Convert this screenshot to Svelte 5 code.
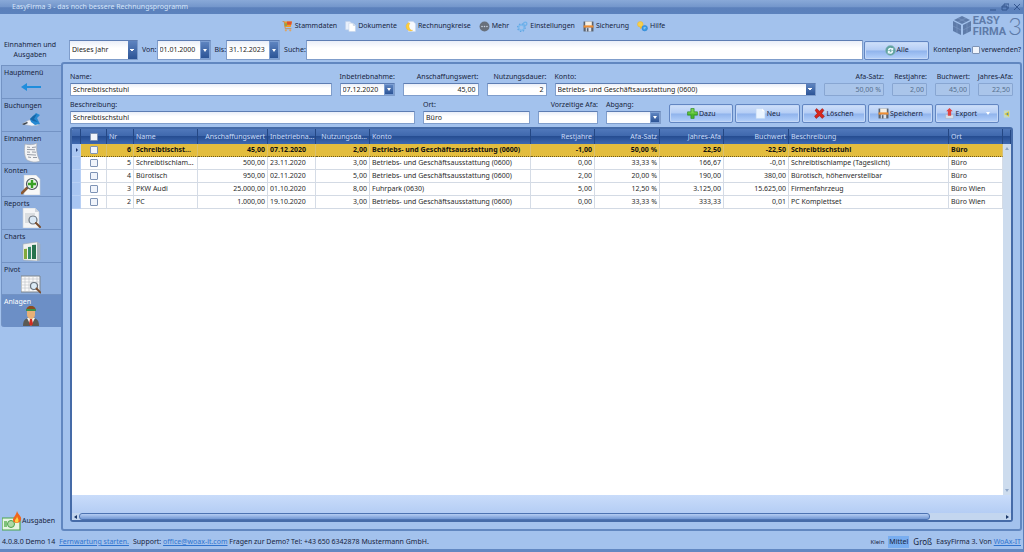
<script>
  let period = $state('Dieses Jahr');
  let accountPlan = $state(false);
  let current = $state(0);

  const menu = [
    ['cart', 'Stammdaten'],
    ['docs', 'Dokumente'],
    ['moon', 'Rechnungkreise'],
    ['more', 'Mehr'],
    ['gears', 'Einstellungen'],
    ['disk', 'Sicherung'],
    ['help', 'Hilfe']
  ];
  const tabs = [
    ['arrow', 'Hauptmenü'],
    ['booking', 'Buchungen'],
    ['receipt', 'Einnahmen'],
    ['account', 'Konten'],
    ['report', 'Reports'],
    ['chart', 'Charts'],
    ['pivot', 'Pivot'],
    ['person', 'Anlagen']
  ];
  const actions = [
    ['plus', 'Dazu'],
    ['page', 'Neu'],
    ['cross', 'Löschen'],
    ['disk', 'Speichern'],
    ['upload', 'Export']
  ];
  const columns = [
    { title: 'Nr', cls: 'c-nr', num: true },
    { title: 'Name', cls: 'c-name' },
    { title: 'Anschaffungswert', cls: 'c-value', num: true },
    { title: 'Inbetriebna...', cls: 'c-date' },
    { title: 'Nutzungsda...', cls: 'c-use', num: true },
    { title: 'Konto', cls: 'c-account' },
    { title: 'Restjahre', cls: 'c-mid', num: true },
    { title: 'Afa-Satz', cls: 'c-broad', num: true },
    { title: 'Jahres-Afa', cls: 'c-mid', num: true },
    { title: 'Buchwert', cls: 'c-broad', num: true },
    { title: 'Beschreibung', cls: 'c-text' },
    { title: 'Ort', cls: 'c-place' }
  ];
  const office = 'Betriebs- und Geschäftsausstattung (0600)';
  const rows = [
    ['6', 'Schreibtischst...', '45,00', '07.12.2020', '2,00', office, '-1,00', '50,00 %', '22,50', '-22,50', 'Schreibtischstuhl', 'Büro'],
    ['5', 'Schreibtischlam...', '500,00', '23.11.2020', '3,00', office, '0,00', '33,33 %', '166,67', '-0,01', 'Schreibtischlampe (Tageslicht)', 'Büro'],
    ['4', 'Bürotisch', '950,00', '02.11.2020', '5,00', office, '2,00', '20,00 %', '190,00', '380,00', 'Bürotisch, höhenverstellbar', 'Büro'],
    ['3', 'PKW Audi', '25.000,00', '01.10.2020', '8,00', 'Fuhrpark (0630)', '5,00', '12,50 %', '3.125,00', '15.625,00', 'Firmenfahrzeug', 'Büro Wien'],
    ['2', 'PC', '1.000,00', '19.10.2020', '3,00', office, '0,00', '33,33 %', '333,33', '0,01', 'PC Komplettset', 'Büro Wien']
  ];
</script>

{#snippet icon(name)}
  <svg class="icon" viewBox="0 0 20 20" aria-hidden="true">
    {#if name === 'cart'}
      <path d="M4 1h14l-2 10H5z" fill="#f39a25" />
      <path d="M9 1h9l-1 6H9z" fill="#dd5230" />
      <path d="M4 4h5v5H5z" fill="#8aa84a" />
      <path d="M1 1h3l2 13h11" fill="none" stroke="#cc8a48" stroke-width="1.6" />
      <circle cx="7" cy="17" r="2" fill="#dba468" /><circle cx="15" cy="17" r="2" fill="#dba468" />
    {:else if name === 'docs'}
      <path d="M1 1h8l4 4v11H1z" fill="#e9f1fc" stroke="#c3d2e8" />
      <path d="M7 4h8l4 4v11H7z" fill="#fff" stroke="#c3d2e8" />
      <path d="M15 4v4h4" fill="#d5e1f1" stroke="#b4c6e0" />
    {:else if name === 'moon'}
      <path d="M6 1h9l4 4v14H6z" fill="#f6f9fe" stroke="#ccd9ec" />
      <path d="M6 3a8 8 0 1 0 8 14C8 17 5 9 9 4z" fill="#ffcf3d" stroke="#e8ac20" stroke-width=".6" />
    {:else if name === 'more'}
      <circle cx="10" cy="10" r="9" fill="#68707c" />
      <circle cx="5.5" cy="10" r="1.5" fill="#c9d3e2" /><circle cx="10" cy="10" r="1.5" fill="#c9d3e2" /><circle cx="14.5" cy="10" r="1.5" fill="#c9d3e2" />
    {:else if name === 'gears'}
      <circle cx="8" cy="12" r="5" fill="none" stroke="#7db9ee" stroke-width="3" />
      <circle cx="8" cy="12" r="7" fill="none" stroke="#5ba2e2" stroke-width="2" stroke-dasharray="2.5 3" />
      <circle cx="15" cy="5" r="3" fill="none" stroke="#6fb1ea" stroke-width="2.4" />
    {:else if name === 'disk'}
      <path d="M1 1h18v18H1z" fill="#5b626d" />
      <path d="M4 1h12v8H4z" fill="#f6f0e4" />
      <path d="M1 8h18v4H1z" fill="#ee8d32" />
      <path d="M5 12h10v7H5z" fill="#dbe3ef" />
      <path d="M7 13h3v6H7z" fill="#56606e" />
    {:else if name === 'help'}
      <circle cx="6" cy="6" r="5" fill="#f5cf50" stroke="#eeb62a" />
      <path d="M5 10l1 5 4-4z" fill="#f0bb2e" />
      <circle cx="14" cy="13" r="5" fill="#389be8" stroke="#2c82cc" />
      <path d="M12 12h4M12 14h3" stroke="#cde8ff" />
    {:else if name === 'arrow'}
      <path d="M0 10l6-4v3h14v2H6v3z" fill="#1f8ddc" />
    {:else if name === 'booking'}
      <path d="M1 14l7-4 6 1 4 4-7 1z" fill="#f4f6fa" stroke="#aab6c8" stroke-width=".6" />
      <path d="M9 9l6-6 4 2-3 3 3 6-5 1-4-3z" fill="#2689d2" />
      <path d="M12 6l4-2-3 5 4 3-5-1-3-2z" fill="#1766a8" />
      <path d="M1 14l5-2 1 1-4 2z" fill="#39424d" />
    {:else if name === 'receipt'}
      <path d="M4 1c4 1 9 1 12-1-1 6 0 13 3 18-4 2-9 1-13-1C3 13 3 7 4 1z" fill="#f3f4f5" stroke="#a2a9b3" stroke-width=".7" />
      <path d="M6 4l3 .4M11 4.5l4-.5M6 6.5l8 .3M6 9l3 .2M11 9l4 .2M6 11.5l9 .6M7 14l3 .5M12 14.5h4" stroke="#8b929d" stroke-width=".9" />
    {:else if name === 'account'}
      <path d="M3 0h12l4 4v16H3z" fill="#f7f8f8" stroke="#c8ced6" stroke-width=".6" />
      <path d="M6 13L1 18" stroke="#8a5a34" stroke-width="2.6" stroke-linecap="round" />
      <circle cx="11" cy="9" r="5.5" fill="#e9f4e6" stroke="#4d5560" stroke-width="1.2" />
      <path d="M11 5v8M7 9h8" stroke="#38a125" stroke-width="2.4" />
    {:else if name === 'report'}
      <path d="M2 0h12l4 4v16H2z" fill="#f4f5f6" stroke="#c8ced6" stroke-width=".6" />
      <path d="M14 0v4h4" fill="#cfd5dc" />
      <path d="M4 6h10M4 8h6M4 10h5M4 12h5M4 14h6" stroke="#b4bac2" stroke-width=".8" />
      <circle cx="12" cy="12" r="4" fill="#d9e8f5" stroke="#6d7680" stroke-width="1.2" />
      <path d="M15 15l4 4" stroke="#7a4d2d" stroke-width="2" stroke-linecap="round" />
    {:else if name === 'chart'}
      <path d="M2 3l14-2 3 2v16l-3 1-14-1z" fill="#f0f1ef" stroke="#9fa8b0" stroke-width=".6" />
      <path d="M16 1l3 2v16l-3 1z" fill="#a7b2bb" />
      <path d="M3 8l3-.3V18H3z" fill="#82a93c" /><path d="M7 6l3-.3V18H7z" fill="#348b68" /><path d="M11 4l4-.3V18h-4z" fill="#27724d" />
    {:else if name === 'pivot'}
      <path d="M0 2h19v16H0z" fill="#fafafa" stroke="#7d858e" />
      <path d="M0 5h19M0 8h19M0 11h19M0 14h19M4 2v16M8 2v16M12 2v16M16 2v16" stroke="#bcc1c7" stroke-width=".6" />
      <circle cx="13" cy="12" r="3.5" fill="#dcebf6" stroke="#69727c" stroke-width="1.2" />
      <path d="M15.5 14.5l4 4" stroke="#7a4d2d" stroke-width="1.8" stroke-linecap="round" />
    {:else if name === 'person'}
      <path d="M2 20c0-7 3-8 8-8s8 1 8 8z" fill="#5b5a54" />
      <path d="M6 12h8l-4 8z" fill="#f4f4ef" /><path d="M9 13h2l1 5-2 2-2-2z" fill="#d22d21" />
      <path d="M6 4h8v5c0 2-2 4-4 4s-4-2-4-4z" fill="#e8b077" />
      <path d="M5 5c0-7 10-7 10 0z" fill="#8a4b22" /><path d="M5 3h10v2H5z" fill="#3d8f4e" />
    {:else if name === 'plus'}
      <path d="M7 1h6v6h6v6h-6v6H7v-6H1V7h6z" fill="#49b629" stroke="#247f1a" stroke-linejoin="round" />
      <path d="M8 2h4v6h6v2H2V8h6z" fill="#8edc62" opacity=".7" />
    {:else if name === 'page'}
      <path d="M2 1h11l5 5v13H2z" fill="#eaf4ff" stroke="#bed7f2" /><path d="M13 1v5h5z" fill="#fff" />
    {:else if name === 'cross'}
      <path d="M2 4l3-3 5 5 5-5 3 3-4 6 5 5-4 4-5-5-6 5-3-4 5-5z" fill="#d8261d" stroke="#8f1713" stroke-linejoin="round" />
    {:else if name === 'upload'}
      <path d="M3 12h14v7H3z" fill="#d9e0ea" stroke="#a6b4c8" />
      <path d="M10 0l6 6h-3v8H7V6H4z" fill="#e04343" />
    {:else if name === 'refresh'}
      <circle cx="10" cy="10" r="9" fill="#5fa39f" stroke="#8fb6c4" />
      <path d="M5 10a5 5 0 0 1 8-4l2-1v5h-5l2-2a3 3 0 0 0-4 2zM15 11a5 5 0 0 1-8 4l-2 1v-5h5l-2 2a3 3 0 0 0 4-2z" fill="#eef9ff" />
    {:else if name === 'back'}
      <path d="M2 1h15v18H2z" fill="#c3d8c4" /><path d="M15 3v14L3 10z" fill="#dccb3c" /><path d="M13 7v6l-5-3z" fill="#3f7fbf" />
    {:else if name === 'money'}
      <path d="M0 7h18v12H0z" fill="#e7f5e3" stroke="#4ba34c" stroke-width="1.2" />
      <circle cx="9" cy="13" r="3.5" fill="#aed9a6" stroke="#4ba34c" /><path d="M2 10h3v6H2z" fill="#7fc27a" />
      <path d="M15 0c1 4 5 5 4 9-1 4-8 4-8 0 0-3 3-4 4-9z" fill="#f0651c" /><path d="M15 5c0 2 2 3 1.5 5s-3.5 2-3.5 0 2-2 2-5z" fill="#ffd244" />
    {/if}
  </svg>
{/snippet}

<div class="app">
  <header class="titlebar">
    <span>EasyFirma 3 - das noch bessere Rechnungsprogramm</span>
    <div class="window-buttons">
      <button aria-label="Minimieren"><svg viewBox="0 0 8 8"><path d="M1 7h6" /></svg></button>
      <button aria-label="Wiederherstellen"><svg viewBox="0 0 8 8"><path d="M3 3V1h5v4H6M1 3h5v4H1zM1 4h5" /></svg></button>
      <button aria-label="Schließen"><svg viewBox="0 0 8 8"><path d="M1 1l6 6M7 1L1 7" /></svg></button>
    </div>
  </header>

  <div class="menubar">
    <nav>
      {#each menu as [glyph, label]}
        <button>{@render icon(glyph)}{label}</button>
      {/each}
    </nav>
    <div class="logo">
      <svg class="cube" viewBox="0 0 18 20" aria-hidden="true">
        <path d="M9 0l8 4-8 4-8-4zM0 5l8 4v10l-8-4zM18 5l-8 4v10l8-4z" />
        <path class="cut" d="M5 2l8 4M13 2L5 6M4 7v10M0 10l8 4M14 7v10M18 10l-8 4" />
      </svg>
      <span class="brand">EASY<br />FIRMA</span>
      <span class="version">3</span>
    </div>
  </div>

  <div class="filters">
    <div class="section-title">Einnahmen und<br />Ausgaben</div>
    <select class="field period" aria-label="Zeitraum" bind:value={period}>
      <option>Dieses Jahr</option>
      <option>Letztes Jahr</option>
    </select>
    <label for="from">Von:</label>
    <div class="combo big"><input id="from" value="01.01.2000" /><button aria-label="Kalender Von"></button></div>
    <label for="to">Bis:</label>
    <div class="combo big"><input id="to" value="31.12.2023" /><button aria-label="Kalender Bis"></button></div>
    <label for="search">Suche:</label>
    <input class="field search" id="search" />
    <button class="action all">{@render icon('refresh')}Alle</button>
    <label class="plan">Kontenplan<input type="checkbox" bind:checked={accountPlan} /><span>verwenden?</span></label>
  </div>

  <div class="body">
    <aside>
      <nav class="tabs">
        {#each tabs as [glyph, label], i}
          <button class:active={i === 7}><span>{label}</span>{@render icon(glyph)}</button>
        {/each}
      </nav>
      <button class="expenses">{@render icon('money')}Ausgaben</button>
    </aside>

    <main>
      <div class="form">
        <div class="cell grow"><label for="name">Name:</label><input class="field" id="name" value="Schreibtischstuhl" /></div>
        <div class="cell w-date"><label for="start">Inbetriebnahme:</label><div class="combo"><input id="start" value="07.12.2020" /><button aria-label="Kalender Inbetriebnahme"></button></div></div>
        <div class="cell w-value num"><label for="value">Anschaffungswert:</label><input class="field" id="value" value="45,00" /></div>
        <div class="cell w-use num"><label for="use">Nutzungsdauer:</label><input class="field" id="use" value="2" /></div>
        <div class="cell grow"><label for="account">Konto:</label><select class="field" id="account"><option>{office}</option><option>Fuhrpark (0630)</option></select></div>
        <div class="cell w-use num"><label for="rate">Afa-Satz:</label><input class="field" id="rate" value="50,00 %" disabled /></div>
        <div class="cell w-small num"><label for="rest">Restjahre:</label><input class="field" id="rest" value="2,00" disabled /></div>
        <div class="cell w-small num"><label for="book">Buchwert:</label><input class="field" id="book" value="45,00" disabled /></div>
        <div class="cell w-small num"><label for="yearly">Jahres-Afa:</label><input class="field" id="yearly" value="22,50" disabled /></div>
      </div>
      <div class="form second">
        <div class="cell grow"><label for="desc">Beschreibung:</label><input class="field" id="desc" value="Schreibtischstuhl" /></div>
        <div class="cell w-place"><label for="place">Ort:</label><input class="field" id="place" value="Büro" /></div>
        <div class="cell w-use num"><label for="early">Vorzeitige Afa:</label><input class="field" id="early" /></div>
        <div class="cell w-date"><label for="exit">Abgang:</label><div class="combo"><input id="exit" /><button aria-label="Kalender Abgang"></button></div></div>
        <div class="actions">
          {#each actions as [glyph, label]}
            <button class="action">{@render icon(glyph)}{label}{#if glyph === 'upload'}<i class="caret"></i>{/if}</button>
          {/each}
          <button class="back" aria-label="Zurück">{@render icon('back')}</button>
        </div>
      </div>

      <div class="grid">
        <div class="rows">
          <table>
            <thead>
              <tr>
                <th class="c-mark"></th>
                <th class="c-check"><input type="checkbox" aria-label="Alle auswählen" /></th>
                {#each columns as c}<th class={c.cls} class:num={c.num && c.title !== 'Nr'}>{c.title}</th>{/each}
                <th class="c-end"></th>
              </tr>
            </thead>
            <tbody>
              {#each rows as row, r}
                <tr class:current={r === current} onclick={() => (current = r)}>
                  <td class="mark">{#if r === current}<i></i>{/if}</td>
                  <td class="check"><input type="checkbox" aria-label={'Nr ' + row[0]} /></td>
                  {#each row as value, c}<td class:num={columns[c].num}>{value}</td>{/each}
                  <td class="end"></td>
                </tr>
              {/each}
            </tbody>
          </table>
          <div class="vscroll"><i class="up"></i><i class="down"></i></div>
        </div>
        <div class="summary"></div>
        <div class="hscroll"><i class="left"></i><div class="track"><div class="thumb"></div></div><i class="right"></i></div>
      </div>
    </main>
  </div>

  <footer>
    <span>4.0.8.0 Demo 14</span>
    <a href="#remote">Fernwartung starten.</a>
    <span>Support: <a href="#mail">office@woax-it.com</a> Fragen zur Demo? Tel: +43 650 6342878 Mustermann GmbH.</span>
    <div class="sizes">
      <button class="small">Klein</button>
      <button class="medium">Mittel</button>
      <button class="large">Groß</button>
      <span>EasyFirma 3. Von <a href="#woax">WoAx-IT</a></span>
    </div>
  </footer>
</div>

<style>
  :global(body) {
    margin: 0;
  }
  .app {
    box-sizing: border-box;
    min-height: 100vh;
    display: flex;
    flex-direction: column;
    background: #a3c2ed;
    border-right: 1px solid #5a7fb8;
    border-bottom: 3px solid #6288c2;
    font: 7px/12px 'Noto Sans', sans-serif;
    color: #17243d;
  }
  .app :global(*) {
    box-sizing: border-box;
  }
  button,
  input,
  select {
    font: inherit;
    color: inherit;
    margin: 0;
    padding: 0;
    border: 0;
    background: none;
    border-radius: 0;
  }
  button {
    white-space: nowrap;
  }
  .icon {
    width: 11px;
    height: 11px;
    flex: none;
  }
  .titlebar {
    height: 14px;
    padding: 0 2px 0 12px;
    display: flex;
    align-items: center;
    justify-content: space-between;
    background: linear-gradient(#89a9d8, #7396cb 50%, #5b80bb 55%, #5c82bd);
    color: #d5e4fa;
  }
  .window-buttons {
    display: flex;
    gap: 4px;
  }
  .window-buttons button {
    height: 8px;
    width: 8px;
    display: flex;
  }
  .window-buttons svg {
    width: 8px;
    height: 8px;
    fill: none;
    stroke: #34568f;
  }
  .menubar {
    height: 24px;
    display: grid;
    grid-template-columns: 1fr auto 1fr;
    align-items: center;
  }
  .menubar nav {
    grid-column: 2;
    display: flex;
    gap: 8px;
    padding-right: 76px;
  }
  .menubar nav button {
    display: flex;
    align-items: center;
    gap: 2px;
  }
  .menubar nav,
  .menubar nav + .logo {
    min-width: 0;
  }
  .logo {
    display: flex;
    justify-content: flex-end;
    align-items: center;
    gap: 2px;
    padding-right: 1px;
    color: #5e7ba9;
  }
  .cube {
    width: 18px;
    height: 20px;
    fill: #5e7ba9;
  }
  .cube .cut {
    fill: none;
    stroke: #7d9ac8;
    stroke-width: 0.6;
  }
  .brand {
    font: bold 11px/11px Roboto, sans-serif;
  }
  .version {
    font: 300 24px/20px Lato, sans-serif;
  }
  .filters {
    height: 24px;
    padding-right: 2px;
    display: flex;
    align-items: center;
  }
  .filters label {
    margin-left: 4px;
  }
  .section-title {
    width: 60px;
    line-height: 10px;
    text-align: center;
    margin-right: 9px;
  }
  .field,
  .combo {
    height: 13px;
    width: 100%;
    padding: 0 2px;
    border: 1px solid #7f9dcb;
    border-top-color: #5d7db3;
    border-radius: 1px;
    background: linear-gradient(#e9eef8, #fff 40%);
    color: #1d1d1d;
  }
  .field:disabled {
    background: #aac5ea;
    border-color: #88a6d2;
    color: #56708f;
    opacity: 1;
  }
  select.field {
    appearance: none;
    background:
      linear-gradient(45deg, transparent 50%, #fff 50%) right 5px center / 2px 3px no-repeat,
      linear-gradient(-45deg, transparent 50%, #fff 50%) right 3px center / 2px 3px no-repeat,
      linear-gradient(#5e84c0, #2c5496) right / 9px 100% no-repeat,
      linear-gradient(#e9eef8, #fff 40%);
  }
  .combo {
    display: flex;
    padding: 0 0 0 2px;
  }
  .combo input {
    flex: 1;
    width: 0;
    min-width: 0;
  }
  .combo button {
    width: 10px;
    display: grid;
    place-items: center;
    background: linear-gradient(#5e84c0, #2c5496);
    border: 1px solid #7d9fd3;
  }
  .combo button::after {
    content: '';
    border: 2px solid transparent;
    border-top: 3px solid #fff;
    border-bottom: 0;
  }
  .filters .field,
  .filters .combo {
    height: 20px;
  }
  .filters .period {
    width: 69px;
    flex: none;
  }
  .combo.big {
    width: 54px;
    flex: none;
  }
  .search.field {
    flex: 1;
    width: 0;
  }
  .action {
    height: 19px;
    flex: 1;
    display: flex;
    align-items: center;
    justify-content: center;
    gap: 1px;
    border: 1px solid #6286c2;
    border-radius: 2px;
    background: linear-gradient(#cfe0fa, #b4cdf5 48%, #8fb3ec 52%, #b6d2fb);
    box-shadow: inset 0 0 0 1px #c4d8f6;
  }
  .all {
    flex: none;
    width: 65px;
    margin-left: 1px;
  }
  .plan {
    display: flex;
    align-items: center;
    gap: 1px;
  }
  input[type='checkbox'] {
    appearance: none;
    width: 8px;
    height: 8px;
    border: 1px solid #7e93b5;
    border-radius: 1px;
    background: #f0f4fb;
    display: block;
  }
  input[type='checkbox']:checked {
    background: #2c5496;
  }
  .body {
    flex: 1;
    display: flex;
  }
  aside {
    width: 61px;
    flex: none;
    display: flex;
    flex-direction: column;
    justify-content: space-between;
    padding-top: 3px;
  }
  .tabs {
    height: 262px;
    display: grid;
    grid-template-rows: repeat(8, 1fr);
  }
  .tabs button {
    margin-left: 1px;
    padding: 0 4px 0 2px;
    display: flex;
    flex-direction: column;
    align-items: flex-start;
    background: #8fafde;
    border-top: 1px solid #7393c4;
    border-left: 1px solid #7393c4;
    min-height: 0;
  }
  .tabs span {
    line-height: 13px;
  }
  .tabs .icon {
    width: 20px;
    height: 20px;
    align-self: center;
    margin-top: -2px;
  }
  .tabs .active {
    background: #6c8fc6;
    color: #fff;
    border-radius: 0 0 0 3px;
  }
  .expenses {
    display: flex;
    align-items: center;
    padding-left: 2px;
  }
  .expenses .icon {
    width: 20px;
    height: 20px;
  }
  main {
    flex: 1;
    min-width: 0;
    margin-right: 1px;
    padding: 6px 7px 7px;
    border: 2px solid #6187c0;
    border-radius: 3px;
    display: flex;
    flex-direction: column;
  }
  .form {
    display: flex;
    align-items: flex-end;
    gap: 8px;
    height: 26px;
  }
  .second {
    height: 28px;
  }
  .cell {
    flex: none;
    display: flex;
    flex-direction: column;
  }
  .cell label {
    line-height: 13px;
    white-space: nowrap;
  }
  .grow {
    flex: 1;
    min-width: 0;
  }
  .num {
    text-align: right;
  }
  .cell.num label {
    display: flex;
    justify-content: flex-end;
  }
  .cell.num input {
    text-align: right;
  }
  .w-date {
    width: 55px;
  }
  .w-value {
    width: 76px;
  }
  .w-use {
    width: 60px;
  }
  .w-small {
    width: 35px;
  }
  .w-place {
    width: 107px;
  }
  .actions {
    width: 344px;
    display: flex;
    align-items: center;
    gap: 2px;
    margin-bottom: 1px;
  }
  .back {
    width: 12px;
    height: 10px;
    display: flex;
    justify-content: center;
    align-items: center;
  }
  .back .icon {
    width: 8px;
    height: 8px;
  }
  .caret {
    border: 2px solid transparent;
    border-top: 3px solid #fff;
    border-bottom: 0;
    margin-left: 8px;
  }
  .grid {
    flex: 1;
    margin-top: 3px;
    display: flex;
    flex-direction: column;
    border: 2px solid #456ba8;
    border-radius: 3px;
    background: #fff;
    overflow: hidden;
  }
  .rows {
    flex: 1;
    position: relative;
  }
  table {
    width: 100%;
    table-layout: fixed;
    border-collapse: separate;
    border-spacing: 0;
  }
  th {
    height: 15px;
    padding: 0 2px;
    font-weight: normal;
    text-align: left;
    color: #c9dbf8;
    background: linear-gradient(#5078bb, #3f68ad 45%, #264d92 50%, #3e69b0);
    border-right: 1px solid #244784;
    white-space: nowrap;
  }
  th.num {
    text-align: right;
  }
  td {
    height: 13px;
    padding: 0 2px;
    line-height: 12px;
    white-space: nowrap;
    color: #2b2b2b;
    border-right: 1px solid #d5dce6;
    border-bottom: 1px solid #d3dae4;
  }
  .current td {
    background: #e3bd3e;
    font-weight: bold;
    color: #111;
    border-bottom: 1px dotted #6e5c1e;
    border-right-color: #d9c070;
  }
  td.mark,
  .current td.mark {
    background: #a9c6f2;
    border-color: #b8d0f5;
    border-bottom-style: solid;
  }
  .mark i {
    display: block;
    width: 0;
    border: 2px solid transparent;
    border-left: 2px solid #16306b;
    border-right: 0;
    margin-left: 2px;
  }
  .check input,
  .c-check input {
    margin: 0 auto;
  }
  .end,
  .current .end {
    background: none;
    border: 0;
  }
  .c-mark { width: 9px; }
  .c-check { width: 26px; }
  .c-nr { width: 27px; }
  .c-name { width: 64px; }
  .c-value { width: 70px; }
  .c-date { width: 48px; }
  .c-use { width: 54px; }
  .c-account { width: 161px; }
  .c-mid { width: 64px; }
  .c-broad { width: 65px; }
  .c-place { width: 54px; }
  .c-end { width: 8px; }
  .vscroll {
    position: absolute;
    top: 15px;
    right: 0;
    bottom: 0;
    width: 8px;
    display: flex;
    flex-direction: column;
    justify-content: space-between;
    align-items: center;
    padding: 3px 0;
    background: #cddcee;
  }
  .up,
  .down {
    border: 2px solid transparent;
  }
  .up {
    border-top: 0;
    border-bottom: 3px solid #8ea6c8;
  }
  .down {
    border-bottom: 0;
    border-top: 3px solid #8ea6c8;
  }
  .summary {
    height: 18px;
    background: linear-gradient(#c9dcfa, #b4cdf4);
  }
  .hscroll {
    height: 7px;
    display: flex;
    align-items: center;
    gap: 2px;
    padding: 0 2px;
    background: #c3d6ef;
  }
  .left,
  .right {
    border: 2px solid transparent;
  }
  .left {
    border-left: 0;
    border-right: 3px solid #1c3768;
  }
  .right {
    border-right: 0;
    border-left: 3px solid #1c3768;
  }
  .track {
    flex: 1;
  }
  .thumb {
    width: 92%;
    height: 7px;
    border: 1px solid #4d73b2;
    border-radius: 3px;
    background: linear-gradient(#b5cdf3, #7398d4);
  }
  footer {
    height: 18px;
    padding: 4px 2px 0;
    display: flex;
    align-items: center;
    gap: 4px;
    white-space: nowrap;
  }
  a {
    color: #2f74cf;
  }
  .sizes {
    margin-left: auto;
    display: flex;
    align-items: center;
    gap: 4px;
  }
  .small {
    font-size: 6px;
  }
  .medium {
    background: #78adf0;
    padding: 0 1px;
  }
  .large {
    font-size: 8px;
  }
</style>
